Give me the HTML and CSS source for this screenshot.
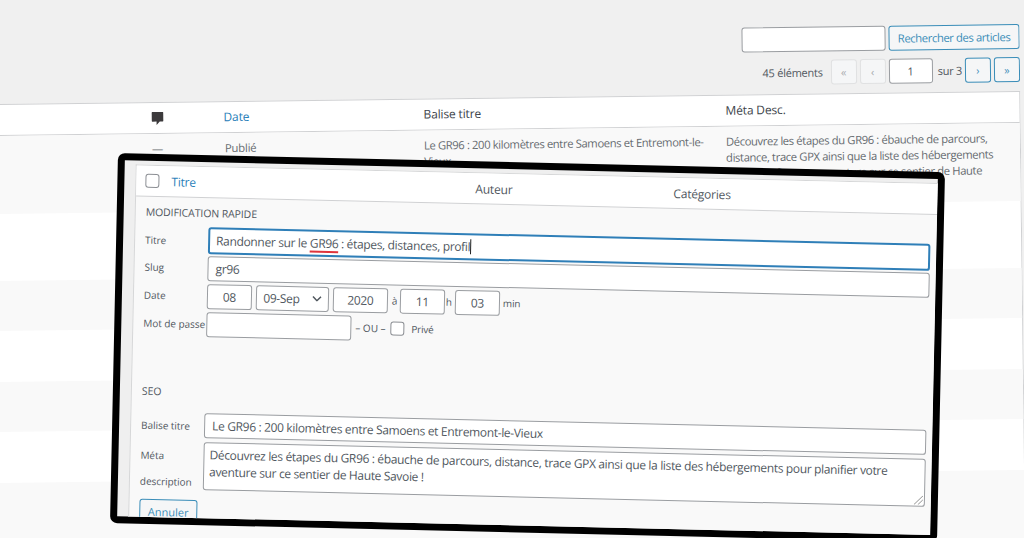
FILE: index.html
```
<!DOCTYPE html>
<html lang="fr">
<head>
    <meta charset="UTF-8">
    <meta name="viewport" content="width=device-width, initial-scale=1.0">
    <title>Articles</title>
    <link rel="stylesheet" href="styles.css">
</head>
<body>
    <div class="page">
        <div class="search">
            <div class="box search-input"></div>
            <div class="btn search-btn">Rechercher des articles</div>
        </div>
        <div class="pager">
            <span class="count">45 éléments</span>
            <span class="btn off">«</span>
            <span class="btn off">‹</span>
            <span class="box current">1</span>
            <span class="total">sur 3</span>
            <span class="btn">›</span>
            <span class="btn">»</span>
        </div>
        <div class="table">
            <div class="row head">
                <div></div>
                <div>
                    <svg class="bubble" width="12" height="13" viewBox="0 0 12 13">
                        <path d="M1 0h10Q12 0 12 1v7.6Q12 9.6 11 9.6H8.2L5 13V9.6H1Q0 9.6 0 8.6V1Q0 0 1 0z" fill="#3c3a3c"/>
                    </svg>
                </div>
                <div class="link">Date</div>
                <div>Balise titre</div>
                <div>Méta Desc.</div>
            </div>
            <div class="row first">
                <div></div>
                <div>—</div>
                <div class="status">Publié</div>
                <div class="tight">Le GR96 : 200 kilomètres entre Samoens et Entremont-le-<br>Vieux</div>
                <div class="tight">Découvrez les étapes du GR96 : ébauche de parcours,<br>distance, trace GPX ainsi que la liste des hébergements<br>pour planifier votre aventure sur ce sentier de Haute</div>
            </div>
            <div class="stripe tall"></div>
            <div class="stripe alt"></div>
            <div class="stripe"></div>
            <div class="stripe alt"></div>
            <div class="stripe"></div>
            <div class="stripe alt last"></div>
        </div>
    </div>

    <div class="frame">
        <div class="panel">
            <div class="panel-head">
                <span class="check"></span>
                <span class="link">Titre</span>
                <span class="author">Auteur</span>
                <span class="cats">Catégories</span>
            </div>
            <div class="form">
                <div class="legend">MODIFICATION RAPIDE</div>
                <div class="field title-field">
                    <label>Titre</label>
                    <div class="box wide focus"><span>Randonner sur le <u>GR96</u> : étapes, distances, profil</span><i class="caret"></i></div>
                </div>
                <div class="field">
                    <label>Slug</label>
                    <div class="box wide">gr96</div>
                </div>
                <div class="field">
                    <label>Date</label>
                    <div class="box small">08</div>
                    <div class="box select">
                        <span>09-Sep</span>
                        <svg width="10" height="6" viewBox="0 0 10 6"><path d="M1 1l4 4 4-4" fill="none" stroke="#50575e" stroke-width="1.5"/></svg>
                    </div>
                    <div class="box year">2020</div>
                    <span class="at">à</span>
                    <div class="box small">11</div>
                    <span class="hour">h</span>
                    <div class="box small">03</div>
                    <span class="min">min</span>
                </div>
                <div class="field">
                    <label>Mot de passe</label>
                    <div class="box pass"></div>
                    <span class="or">– OU –</span>
                    <span class="check"></span>
                    <span class="private">Privé</span>
                </div>
                <div class="legend seo">SEO</div>
                <div class="field seo-title">
                    <label>Balise titre</label>
                    <div class="box wide">Le GR96 : 200 kilomètres entre Samoens et Entremont-le-Vieux</div>
                </div>
                <div class="field seo-desc">
                    <label>Méta description</label>
                    <div class="box area">
                        Découvrez les étapes du GR96 : ébauche de parcours, distance, trace GPX ainsi que la liste des hébergements pour planifier votre<br>
                        aventure sur ce sentier de Haute Savoie !
                        <svg class="grip" width="9" height="9" viewBox="0 0 9 9"><path d="M0 9L9 0M4 9l5-5" stroke="#777" stroke-width=".8"/></svg>
                    </div>
                </div>
                <div class="btn cancel">Annuler</div>
            </div>
        </div>
    </div>
</body>
</html>
```

FILE: styles.css
```
* {
    box-sizing: border-box;
}

html {
    overflow: hidden;
}

body {
    margin: 0;
    height: 538px;
    overflow: hidden;
    position: relative;
    background: #f0f0f0;
    color: #50575e;
    font-family: "Open Sans", "Noto Sans", sans-serif;
    font-size: 12px;
    white-space: nowrap;
}

/* background list, tilted to the left */
.page {
    width: 1039px;
    height: 552px;
    margin-left: -20px;
    padding-top: 37px;
    overflow: hidden;
    transform: rotate(-0.73deg);
    transform-origin: 20px 0;
}

.box {
    display: flex;
    align-items: center;
    justify-content: center;
    height: 25px;
    background: #fff;
    border: 1px solid #9a9da1;
    border-radius: 3px;
}

.btn {
    display: flex;
    align-items: center;
    justify-content: center;
    width: 26px;
    height: 25px;
    border: 1px solid #3a8db8;
    border-radius: 3px;
    color: #3a8db8;
    background: #f5f6f7;
}

.link {
    color: #2a80b9;
}

.search,
.pager {
    display: flex;
    justify-content: flex-end;
    gap: 3px;
}

.search-input {
    width: 144px;
}

.search-btn {
    width: 131px;
    font-size: 11.3px;
    letter-spacing: -0.42px;
}

.pager {
    align-items: center;
    margin-top: 8px;
    font-size: 11px;
}

.count {
    margin-right: 5px;
    letter-spacing: -0.25px;
}

.off {
    color: #a7aaad;
    border-color: #e0e1e2;
}

.current {
    width: 44px;
}

.total {
    margin: 0 0 0 2px;
    letter-spacing: -0.25px;
}

.table {
    margin-top: 9px;
    border-top: 1px solid #d0d1d3;
    border-right: 1px solid #d0d1d3;
    background: #fff;
}

.row {
    display: grid;
    grid-template-columns: 170px 72px 200px 302px auto;
}

.head {
    height: 31px;
    padding-bottom: 1px;
    align-items: center;
    border-bottom: 1px solid #d0d1d3;
    color: #3c434a;
    letter-spacing: -0.15px;
}

.bubble {
    display: block;
    margin-top: 1px;
}

.first {
    height: 78px;
    padding-top: 7px;
    background: #f9f9f9;
    line-height: 16px;
    font-size: 11.3px;
    color: #666b70;
}

.status {
    padding-left: 1px;
    letter-spacing: -0.2px;
}

.tight {
    letter-spacing: -0.4px;
}

.stripe {
    height: 51px;
}

.tall {
    height: 67px;
}

.alt {
    height: 50px;
    background: #f9f9f9;
}

.last {
    height: 120px;
}

/* quick edit capture, tilted to the right */
.frame {
    position: absolute;
    left: 118px;
    top: 153px;
    width: 827px;
    height: 370px;
    border: 7px solid #000;
    border-radius: 7px;
    overflow: hidden;
    background: #efefef;
    transform: matrix(1, 0.0232, -0.0216, 1, 0, 0);
    transform-origin: 0 0;
}

.panel {
    margin: 4px 0 0 11px;
    height: 360px;
    background: #f9f9f9;
    border-left: 1px solid #d6d7d8;
    border-top: 1px solid #d6d7d8;
}

.panel-head {
    display: flex;
    align-items: center;
    height: 31px;
    padding-left: 9px;
    background: #fff;
    border-bottom: 1px solid #d0d1d3;
    letter-spacing: -0.2px;
}

.check {
    width: 14px;
    height: 14px;
    border: 1px solid #8c8f94;
    border-radius: 3px;
    background: #fff;
}

.panel-head .link {
    width: 304px;
    margin-left: 12px;
}

.author {
    width: 198px;
}

.form {
    padding-left: 10px;
}

.legend {
    height: 29px;
    line-height: 31px;
    font-size: 10.5px;
    letter-spacing: -0.1px;
}

.field {
    display: flex;
    align-items: center;
    height: 28px;
    font-size: 10px;
}

.field label {
    width: 63px;
    letter-spacing: -0.05px;
}

.field .box {
    font-size: 12px;
    letter-spacing: -0.34px;
}

.title-field {
    height: 27px;
}

.wide {
    width: 722px;
    padding-left: 7px;
    justify-content: flex-start;
}

.focus {
    height: 27px;
    padding-left: 6px;
    border: 2px solid #2f7fb8;
}

.caret {
    width: 1px;
    height: 15px;
    background: #222;
}

u {
    text-decoration: underline 1.5px #e0343c;
    text-underline-offset: 3px;
}

.small {
    width: 45px;
}

.select {
    width: 73px;
    margin: 0 4px;
    gap: 12px;
}

.year {
    width: 55px;
}

.at {
    width: 12px;
    padding-left: 4px;
}

.hour {
    width: 10px;
    padding-left: 1px;
}

.min {
    padding-left: 3px;
    letter-spacing: -0.2px;
}

.pass {
    width: 145px;
}

.or {
    width: 39px;
    padding-left: 4px;
}

.private {
    margin-left: 7px;
    letter-spacing: -0.2px;
}

.seo {
    margin-top: 39px;
}

.seo-title {
    margin-top: 5px;
}

.seo-title label {
    padding-top: 1px;
}

.seo-desc {
    height: 50px;
    margin-top: 2px;
}

.seo-desc label {
    padding-top: 5px;
    line-height: 26px;
    white-space: normal;
}

.area {
    position: relative;
    display: block;
    width: 722px;
    height: 48px;
    padding: 3px 5px;
    line-height: 17px;
}

.grip {
    position: absolute;
    right: 1px;
    bottom: 1px;
}

.cancel {
    width: 58px;
    margin-top: 9px;
    font-size: 11px;
}
```
